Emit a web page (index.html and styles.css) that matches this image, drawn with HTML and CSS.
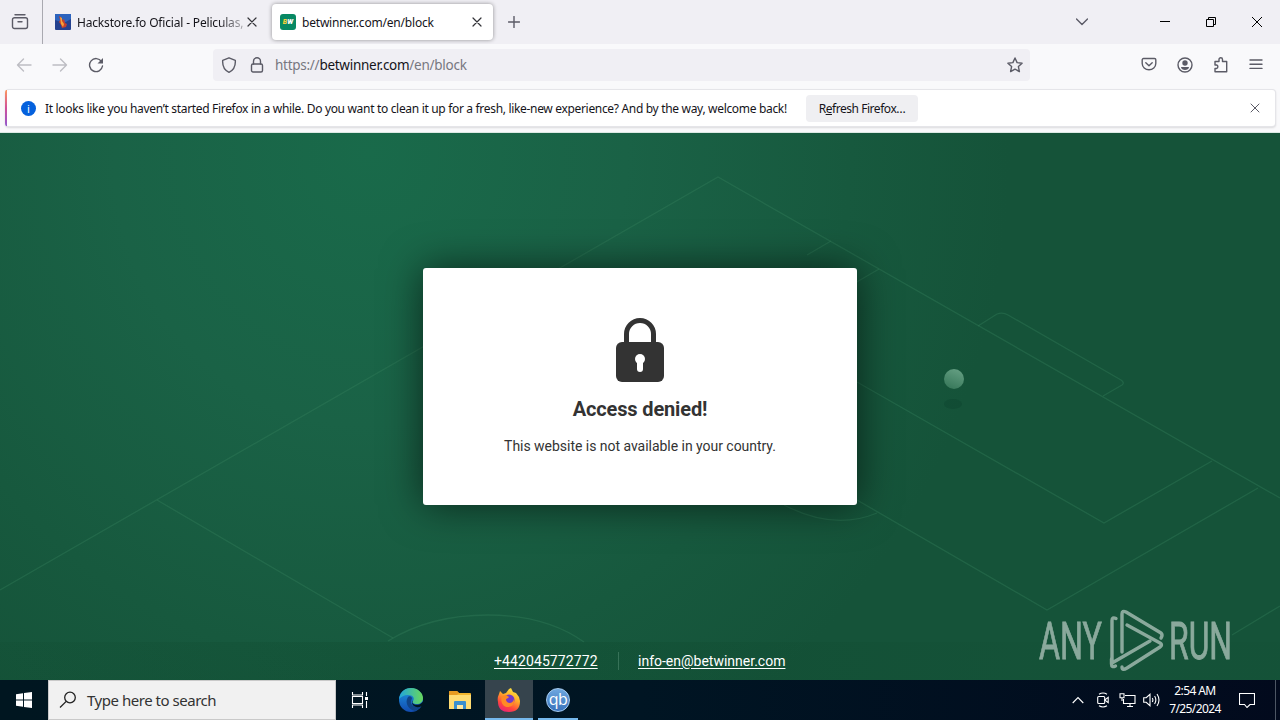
FILE: index.html
```html
<!DOCTYPE html>
<html lang="en">
<head>
    <meta charset="UTF-8">
    <meta name="viewport" content="width=device-width, initial-scale=1.0">
    <title>betwinner.com/en/block</title>
    <link rel="stylesheet" href="styles.css">
</head>
<body>
    <div class="desktop">
        <!-- Tab strip -->
        <div class="tab-strip">
            <div class="recent-view">
                <svg class="icon" width="18" height="18" viewBox="0 0 18 18"><path d="M4 1.700h10M3.500 4.700h11a2 2 0 0 1 2 2v6.800a2 2 0 0 1-2 2h-11a2 2 0 0 1-2-2V6.700a2 2 0 0 1 2-2zM7 8.700h4"/></svg>
            </div>
            <div class="tab">
                <svg width="16" height="16" viewBox="0 0 16 16"><rect width="16" height="16" rx="1" fill="#24418f"/><path d="M0 0h16v5L9 9 0 6z" fill="#2c63bd"/><path d="M4 2l2 1 1 3 2-1 1 4 2 1-1 3-4 1-1-3-2-3 1-2z" fill="#c6412c"/><path d="M5 3l2 1v3l2 3-1 3-2-3z" fill="#f5a33a"/></svg>
                <span class="tab-label fade">Hackstore.fo Oficial - Peliculas,</span>
                <svg class="icon dark tab-close" width="10" height="10" viewBox="0 0 10 10"><path d="M1 1l8 8M9 1L1 9"/></svg>
            </div>
            <div class="tab active">
                <div class="bw-favicon"><span>B</span>W</div>
                <span class="tab-label">betwinner.com/en/block</span>
                <svg class="icon dark tab-close" width="10" height="10" viewBox="0 0 10 10"><path d="M1 1l8 8M9 1L1 9"/></svg>
            </div>
            <svg class="icon new-tab" width="12" height="12" viewBox="0 0 12 12"><path d="M6 .5v11M.5 6h11"/></svg>
            <div class="window-controls">
                <svg class="icon all-tabs" width="12" height="8" viewBox="0 0 12 8"><path d="M.5 1L6 6.500 11.500 1"/></svg>
                <svg class="control" width="10" height="10" viewBox="0 0 10 10"><path d="M0 4.500h10"/></svg>
                <svg class="control" width="10" height="10" viewBox="0 0 10 10"><path d="M.5 2.500h7v7h-7zM2.500 2.500v-2h7v7h-2"/></svg>
                <svg class="control" width="10" height="10" viewBox="0 0 10 10"><path d="M0 0l10 10M10 0L0 10"/></svg>
            </div>
        </div>

        <!-- Navigation bar -->
        <div class="nav-bar">
            <div class="nav-buttons">
                <svg class="icon disabled" width="16" height="16" viewBox="0 0 16 16"><path d="M15 8H1.500M7.500 2l-6 6 6 6"/></svg>
                <svg class="icon disabled" width="16" height="16" viewBox="0 0 16 16"><path d="M1 8h13.500M8.500 2l6 6-6 6"/></svg>
                <svg class="icon" width="16" height="16" viewBox="0 0 16 16"><path d="M13.500 4.500A6.500 6.500 0 1 0 14.500 9"/><path class="fill" d="M15 1v5.500H9.500z"/></svg>
            </div>
            <div class="url-bar">
                <svg class="icon" width="16" height="16" viewBox="0 0 16 16"><path d="M8 .8l6.300 2.500c.4 5.500-1.300 9.700-6.300 12C3 13 1.300 8.800 1.700 3.300z"/></svg>
                <svg class="icon" width="14" height="16" viewBox="0 0 14 16"><rect x="1.500" y="7" width="11" height="8" rx="1.500"/><path d="M3.500 7V4.300a3.500 3.500 0 0 1 7 0V7"/></svg>
                <div class="url">https://<span class="host">betwinner.com</span>/en/block</div>
                <svg class="icon star" width="16" height="16" viewBox="0 0 16 16"><path d="M8 1l2.100 4.600 5 .6-3.700 3.400 1 5L8 12.100l-4.400 2.500 1-5L.9 6.200l5-.6z"/></svg>
            </div>
            <div class="nav-tools">
                <svg class="icon" width="16" height="16" viewBox="0 0 16 16"><path d="M2.500 1.500h11a1.300 1.300 0 0 1 1.300 1.300V6.500a6.800 6.300 0 0 1-13.600 0V2.800a1.300 1.300 0 0 1 1.300-1.300zM4.800 5.700L8 8.800l3.200-3.100"/></svg>
                <svg class="icon" width="16" height="16" viewBox="0 0 16 16"><circle cx="8" cy="8" r="7"/><circle class="fill" cx="8" cy="6" r="2.700"/><path class="fill" d="M4 10h8c0 4-8 4-8 0z"/></svg>
                <svg class="icon" width="16" height="16" viewBox="0 0 16 16"><path d="M2 4.500h4V2.500a1.700 1.700 0 0 1 3.500 0v2h4.200v10.200H2v-3.200h1.500a1.800 1.800 0 0 0 0-3.500H2z"/></svg>
                <svg class="icon" width="14" height="12" viewBox="0 0 14 12"><path d="M1 1h12M1 5.200h12M1 9.400h12"/></svg>
            </div>
        </div>

        <!-- Notification -->
        <div class="notification-wrap">
            <div class="notification">
                <div class="info-badge">i</div>
                <span class="message">It looks like you haven’t started Firefox in a while. Do you want to clean it up for a fresh, like-new experience? And by the way, welcome back!</span>
                <button class="refresh"><span>R<u>e</u>fresh Firefox…</span></button>
                <svg class="icon dismiss" width="10" height="10" viewBox="0 0 10 10"><path d="M1 1l8 8M9 1L1 9"/></svg>
            </div>
        </div>

        <!-- Blocked page -->
        <main class="page">
            <svg class="field" width="1280" height="547" viewBox="0 133 1280 547">
                <defs>
                    <linearGradient id="ball" x1=".7" y1="0" x2=".3" y2="1">
                        <stop offset="0" stop-color="#649e82"/>
                        <stop offset="1" stop-color="#37785a"/>
                    </linearGradient>
                </defs>
                <g class="field-lines">
                    <path d="M0 590L718 177l562 321"/>
                    <path d="M157 500l236 138"/>
                    <path d="M388 641Q430 615 488 615T584 642"/>
                    <path d="M831 241l-24 14M879 269l-24 14"/>
                    <path d="M978 326l19-12q6-2 11 1l113 65q4 3 1 5l-19 11"/>
                    <path d="M857 382l247 141 108-62"/>
                    <path d="M857 500l190 110 211-122"/>
                    <path d="M784 505q50 26 93 8"/>
                    <path d="M1232 635l48-29"/>
                </g>
                <ellipse cx="953" cy="404" rx="9" ry="5" fill="#0e4630" fill-opacity=".5"/>
                <circle cx="954" cy="379" r="10" fill="url(#ball)"/>
            </svg>
            <section class="card">
                <svg width="48" height="64" viewBox="0 0 48 64">
                    <path d="M10.500 26V16a13.500 13.500 0 0 1 27 0v10" fill="none" stroke="#333" stroke-width="5"/>
                    <rect y="24" width="48" height="40" rx="6" fill="#333"/>
                    <circle cx="24" cy="41" r="5" fill="#fff"/>
                    <path d="M24 43v8" stroke="#fff" stroke-width="6" stroke-linecap="round"/>
                </svg>
                <h1>Access denied!</h1>
                <p>This website is not available in your country.</p>
            </section>
            <footer class="contacts">
                <a class="phone" href="tel:+442045772772">+442045772772</a>
                <a class="email" href="mailto:info-en@betwinner.com">info-en@betwinner.com</a>
            </footer>
            <svg class="watermark" width="200" height="70" viewBox="1036 605 200 70">
                <text x="1039" y="659" textLength="63" lengthAdjust="spacingAndGlyphs">ANY</text>
                <g class="mark">
                    <path d="M1116 618.500q-4-2-4 2V663l38-22"/>
                    <path d="M1111.500 659v5q0 4 4 2"/>
                    <path d="M1122 652v-38q0-4 4-2l35 21q2 2 0 5"/>
                    <path d="M1127 625l33 18q3 2 0 4l-33 21q-5 3-5-1"/>
                </g>
                <text x="1169" y="659" textLength="63" lengthAdjust="spacingAndGlyphs">RUN</text>
            </svg>
        </main>

        <!-- Taskbar -->
        <div class="taskbar">
            <div class="start">
                <svg width="16" height="16" viewBox="0 0 16 16"><path fill="#fff" d="M0 2.300l7-1v6.300H0zM8 1.100L16 0v7.600H8zM0 8.500h7v6.300l-7-1zM8 8.500h8V16l-8-1.100z"/></svg>
            </div>
            <div class="search">
                <svg width="18" height="18" viewBox="0 0 18 18"><circle cx="11" cy="6.500" r="5.300"/><path d="M7.200 10.400L1 16.500"/></svg>
                <span>Type here to search</span>
            </div>
            <div class="task">
                <svg class="line" width="18" height="18" viewBox="0 0 18 18"><path d="M1.500 1v3h10V1M1.500 17v-3h10v3M1.500 5.500h10v7h-10zM15.500 1v4M15.500 10v7"/><rect class="solid" x="14" y="6" width="3" height="3"/></svg>
            </div>
            <div class="task edge">
                <svg width="24" height="24" viewBox="0 0 24 24">
                    <defs>
                        <linearGradient id="edgeTop"><stop offset="0" stop-color="#20a5dc"/><stop offset="1" stop-color="#68d85c"/></linearGradient>
                        <linearGradient id="edgeLow" x2="0" y2="1"><stop offset="0" stop-color="#1d96df"/><stop offset="1" stop-color="#124bb0"/></linearGradient>
                    </defs>
                    <circle cx="12" cy="12" r="12" fill="url(#edgeLow)"/>
                    <path d="M0 11C1 3 7 0 12 0c7 0 12 5 12 10 0 4-3 6-6 6-4 0-5-2-4-3 2-3 0-6-5-6-4 0-7 2-9 4z" fill="url(#edgeTop)"/>
                    <path d="M9 9c-4 6 1 13 7 14 3-1 5-3 6-5-5 2-10 0-10-4 0-2 1-3 1-4-1-2-3-2-4-1z" fill="#104487"/>
                    <path d="M13.500 13.500c-1 2 2 3.500 5 3.200 2.500-.2 4-1.200 5.500-3.200v4l-2 1c-5 2-9-1-9-4 0-2 1-2 .5-1z" fill="#001620"/>
                </svg>
            </div>
            <div class="task">
                <svg width="22" height="20" viewBox="0 0 22 20"><path d="M0 2q0-1 1-1h7l2 2h11q1 0 1 1v14H0z" fill="#f3b62d"/><path d="M0 5h22v14H0z" fill="#ffdc72"/><path d="M0 2q0-1 1-1h7l2 2-2 2H0z" fill="#e79b20"/><path d="M5 19v-7q0-1 1-1h10q1 0 1 1v7h-3v-4H8v4z" fill="#3a8fce"/><path d="M8 15h6v4H8z" fill="#ffe8a0"/></svg>
            </div>
            <div class="task running selected">
                <svg width="24" height="24" viewBox="0 0 24 24">
                    <defs><linearGradient id="fox" x1=".8" y1="0" x2=".3" y2="1"><stop offset="0" stop-color="#fff044"/><stop offset=".4" stop-color="#ffad29"/><stop offset=".75" stop-color="#ff463d"/><stop offset="1" stop-color="#e92376"/></linearGradient></defs>
                    <path d="M2 6l1-3 3 3 3-1 3-4 2-1 2 4 3 1 3 4 1 4q0 11-11 11T1 14q-1-4 1-8z" fill="url(#fox)"/>
                    <circle cx="12" cy="12" r="5.500" fill="#743ac8"/>
                    <path d="M5 8l4-1 3 2c-1 2-3 1-3 3 1 4 7 4 8-1 1 5-2 8-6 8-5 0-8-5-6-11z" fill="#ff8a25"/>
                </svg>
            </div>
            <div class="task running">
                <div class="qb">qb</div>
            </div>
            <div class="tray">
                <svg class="line chevron" width="12" height="8" viewBox="0 0 12 8"><path d="M.7 7L6 1.500 11.300 7"/></svg>
                <svg class="line meet" width="12" height="16" viewBox="0 0 12 16"><rect x=".7" y="4.500" width="7" height="7" rx="1"/><path d="M7.700 8l3.500-2.700v5.400zM2 2.300q4-2.500 8 0M2 13.700q4 2.500 8 0"/></svg>
                <svg class="line network" width="17" height="14" viewBox="0 0 17 14"><path d="M6 2.500h10v8H4.500V6M8 13.500h6M11 10.500v3M1 .7h4v4H1zM3 4.700V8"/></svg>
                <svg class="line volume" width="17" height="14" viewBox="0 0 17 14"><path d="M.7 4.700h2.500L7 1.300v11.400L3.200 9.300H.700zM9.300 5q1.200 2 0 4M11.600 3q2.500 4 0 8M14 1q4 6 0 12"/></svg>
                <div class="clock">
                    <span>2:54 AM</span>
                    <span>7/25/2024</span>
                </div>
                <svg class="line action-center" width="16" height="16" viewBox="0 0 16 16"><path d="M.5 1.500h15v11H11L8 15.500l-2.500-3h-5z"/></svg>
                <div class="show-desktop"></div>
            </div>
        </div>
    </div>
</body>
</html>
```
FILE: styles.css
```css
:root {
    --chrome: #f0eff4;
    --toolbar: #f9f9fb;
    --icon: #5b5b66;
    --text: #15141a;
    --ui-font: "Noto Sans", "Open Sans", sans-serif;
}

* {
    box-sizing: border-box;
}

body {
    margin: 0;
    font-family: var(--ui-font);
    color: var(--text);
    overflow: hidden;
}

svg {
    display: block;
    flex-shrink: 0;
}

.desktop {
    display: flex;
    flex-direction: column;
    width: 1280px;
    height: 720px;
}

.icon {
    fill: none;
    stroke: var(--icon);
    stroke-width: 1.4;
    stroke-linejoin: round;
    stroke-linecap: round;
}

.icon .fill {
    fill: var(--icon);
    stroke: none;
}

.icon.dark {
    stroke: #333338;
    stroke-width: 1.2;
}

.icon.disabled {
    stroke: #bdbdc3;
}

/* Tab strip */
.tab-strip {
    display: flex;
    align-items: center;
    height: 44px;
    background: var(--chrome);
}

.recent-view {
    display: flex;
    align-items: center;
    width: 43px;
    height: 44px;
    padding-left: 11px;
    border-right: 1px solid #a9a9b0;
}

.tab {
    display: flex;
    align-items: center;
    width: 221px;
    height: 36px;
    margin-left: 4px;
    padding: 0 11px 0 8px;
    border-radius: 4px;
    font-size: 12px;
}

.tab.active {
    margin-left: 4px;
    background: #fff;
    box-shadow: 0 0 4px rgba(0, 0, 0, 0.4);
}

.tab-label {
    margin-left: 6px;
    white-space: nowrap;
    letter-spacing: -0.2px;
}

.tab-label.fade {
    letter-spacing: -0.17px;
    mask-image: linear-gradient(to right, #000 85%, rgba(0, 0, 0, 0.3));
}

.tab-close {
    margin-left: auto;
}

.bw-favicon {
    width: 16px;
    height: 16px;
    border-radius: 3px;
    background: #078863;
    color: #fff;
    font: italic 900 7px/16px "Roboto", sans-serif;
    text-align: center;
}

.bw-favicon span {
    color: #f2cf3b;
}

.new-tab {
    margin-left: 15px;
}

.window-controls {
    display: flex;
    align-items: center;
    gap: 36px;
    margin-left: auto;
    padding-right: 18px;
}

.all-tabs {
    margin-right: 36px;
}

.control {
    fill: none;
    stroke: #000;
    stroke-width: 1;
}

/* Navigation bar */
.nav-bar {
    display: flex;
    align-items: center;
    height: 41px;
    background: var(--toolbar);
}

.nav-buttons {
    display: flex;
    gap: 20px;
    width: 213px;
    padding-left: 16px;
}

.url-bar {
    display: flex;
    align-items: center;
    width: 817px;
    height: 32px;
    padding: 0 7px 0 8px;
    border-radius: 4px;
    background: var(--chrome);
}

.url-bar .icon:nth-child(2) {
    margin-left: 13px;
}

.url {
    margin-left: 11px;
    font-size: 13.5px;
    color: #777780;
    letter-spacing: -0.27px;
}

.host {
    color: var(--text);
}

.star {
    margin-left: auto;
}

.nav-tools {
    display: flex;
    align-items: center;
    gap: 20px;
    margin-left: auto;
    padding-right: 17px;
}

/* Notification */
.notification-wrap {
    height: 48px;
    padding: 4px 4px 5px 5px;
    background: var(--toolbar);
    border-bottom: 1px solid #dce9e4;
}

.notification {
    display: flex;
    align-items: center;
    height: 38px;
    padding: 0 15px 0 14px;
    border: 1px solid #e5e5e9;
    border-left: 2px solid transparent;
    border-radius: 4px;
    background: linear-gradient(#ff9a5a, #d0509a 50%, #8f58cf) left / 2px 100% no-repeat border-box, #fff;
    box-shadow: 0 1px 2px rgba(0, 0, 0, 0.12);
    font-size: 12px;
}

.info-badge {
    width: 15px;
    height: 15px;
    border-radius: 50%;
    background: #0561dd;
    color: #fff;
    font-size: 11px;
    line-height: 15px;
    text-align: center;
}

.message {
    width: 744px;
    margin-left: 9px;
    white-space: nowrap;
    letter-spacing: -0.322px;
}

.refresh {
    width: 112px;
    height: 27px;
    margin-left: 17px;
    padding: 0;
    border: none;
    border-radius: 4px;
    background: #efeff2;
    color: var(--text);
    font-family: var(--ui-font);
    font-size: 12px;
    letter-spacing: -0.45px;
}

.dismiss {
    margin-left: auto;
    stroke-width: 1;
}

/* Blocked page */
.page {
    position: relative;
    display: flex;
    flex-direction: column;
    align-items: center;
    height: 547px;
    padding-top: 135px;
    background: radial-gradient(ellipse 640px 680px at 370px 20px, #196a4a 0%, #1a6246 40%, #17593e 75%, #155339 100%);
    font-family: "Roboto", sans-serif;
}

.field {
    position: absolute;
    top: 0;
    left: 0;
}

.field-lines {
    fill: none;
    stroke: #37835d;
    stroke-opacity: 0.36;
    stroke-width: 1.3;
}

.card {
    position: relative;
    display: flex;
    flex-direction: column;
    align-items: center;
    width: 434px;
    height: 237px;
    padding-top: 50px;
    border-radius: 3px;
    background: #fff;
    box-shadow: 0 0 40px rgba(0, 0, 0, 0.6);
    color: #333;
}

.card h1 {
    margin: 15px 0 0;
    font-size: 20px;
    font-weight: 700;
    line-height: 24px;
    letter-spacing: -0.15px;
}

.card p {
    margin: 15px 0 0;
    font-size: 14px;
    line-height: 20px;
    letter-spacing: -0.03px;
}

.contacts {
    position: relative;
    display: flex;
    align-items: center;
    width: 100%;
    height: 38px;
    margin-top: auto;
    padding-left: 494px;
    background: linear-gradient(to right, rgba(10, 65, 38, 0.1), rgba(10, 65, 38, 0.25) 40%, rgba(10, 65, 38, 0.05) 80%);
    font-size: 14px;
}

.contacts a {
    color: #fff;
    text-underline-offset: 2px;
    white-space: nowrap;
}

.phone {
    width: 125px;
    border-right: 1px solid #377258;
    line-height: 18px;
    letter-spacing: 0.1px;
}

.email {
    margin-left: 19px;
}

.watermark {
    position: absolute;
    left: 1036px;
    top: 472px;
    overflow: visible;
    opacity: 0.5;
}

.watermark text {
    fill: #fff;
    stroke: #fff;
    stroke-width: 0.8;
    font: 400 52px "Roboto", sans-serif;
}

.mark {
    fill: none;
    stroke: #fff;
    stroke-width: 3.4;
    stroke-linecap: round;
    stroke-linejoin: round;
}

/* Taskbar */
.taskbar {
    display: flex;
    height: 40px;
    background: linear-gradient(to right, #001620, #001523 50%, #020a1d);
    color: #fff;
}

.start {
    display: flex;
    align-items: center;
    justify-content: center;
    width: 48px;
}

.search {
    display: flex;
    align-items: center;
    width: 288px;
    padding-left: 10px;
    border: 1px solid #c9c9c9;
    background: #f1f1f1;
    color: #333;
    font-size: 15px;
}

.search svg {
    fill: none;
    stroke: #222;
    stroke-width: 1.3;
}

.search span {
    margin-left: 10px;
    letter-spacing: -0.47px;
}

.task {
    display: flex;
    align-items: center;
    justify-content: center;
    width: 48px;
    margin-right: 1px;
}

.task.edge {
    margin-left: 2px;
}

.task.running {
    box-shadow: inset 0 -2px #76b9ed;
}

.task.running:not(.selected) {
    width: 40px;
    margin-left: 4px;
}

.task.selected {
    background: #36444d;
}

.line {
    fill: none;
    stroke: #fff;
    stroke-width: 1.1;
}

.line .solid {
    fill: #fff;
    stroke: none;
}

.qb {
    width: 24px;
    height: 24px;
    border: 1px solid #a7cdf2;
    border-radius: 50%;
    background: linear-gradient(#6ea7df, #3972bb);
    font: 16px/20px "Open Sans", sans-serif;
    text-align: center;
    letter-spacing: -0.5px;
}

.tray {
    display: flex;
    align-items: center;
    margin-left: auto;
}

.meet {
    margin-left: 13px;
}

.network {
    margin-left: 10px;
}

.volume {
    margin-left: 7px;
}

.clock {
    display: flex;
    flex-direction: column;
    width: 70px;
    align-items: center;
    font-size: 12px;
    line-height: 18px;
    letter-spacing: -0.6px;
}

.action-center {
    margin-left: 9px;
}

.show-desktop {
    width: 5px;
    height: 40px;
    margin-left: 20px;
    border-left: 1px solid #4d5664;
}
```
